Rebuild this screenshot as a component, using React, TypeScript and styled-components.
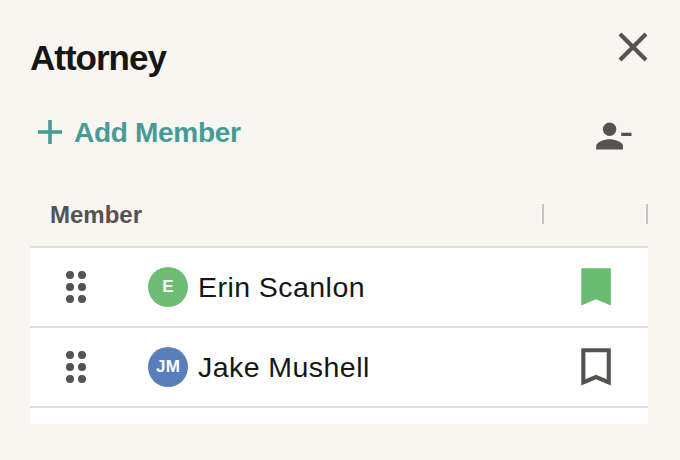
import React from 'react';
import styled, { createGlobalStyle } from 'styled-components';

const GlobalStyle = createGlobalStyle`
  * { box-sizing: border-box; }
  body {
    margin: 0;
    background: #f7f6f1;
    font-family: 'Liberation Sans', Arial, sans-serif;
    color: #161616;
  }
  svg { display: block; }
`;

const Panel = styled.main`
  width: 680px;
  height: 460px;
  padding: 31px 32px 0 30px;
  display: flex;
  flex-direction: column;
  overflow: hidden;
`;

const TitleBar = styled.header`
  display: flex;
  justify-content: space-between;
  align-items: flex-start;
  height: 79px;
`;

const Title = styled.h1`
  margin: 7px 0 0;
  font-size: 35px;
  line-height: 40px;
  font-weight: 700;
  letter-spacing: -1px;
`;

const IconButton = styled.button`
  display: block;
  padding: 0;
  border: 0;
  background: none;
  color: #555250;
`;

const Toolbar = styled.div`
  display: flex;
  justify-content: space-between;
  align-items: flex-start;
  height: 74px;
  padding: 6px 16px 0 8px;
`;

const AddButton = styled.button`
  display: flex;
  align-items: center;
  gap: 12px;
  height: 32px;
  padding: 0;
  border: 0;
  background: none;
  color: #469b97;
  font: 700 28px/32px 'Liberation Sans', Arial, sans-serif;
  letter-spacing: -0.3px;
`;

const AddLabel = styled.span`
  padding-top: 2px;
`;

const RemoveSlot = styled.div`
  padding-top: 4px;
`;

const columns = '512px 104px 2px';

const TableHead = styled.div`
  display: grid;
  grid-template-columns: ${columns};
  align-items: center;
  height: 62px;
  padding-bottom: 2px;
`;

const HeadLabel = styled.div`
  padding: 2px 0 0 20px;
  font-size: 24px;
  line-height: 28px;
  font-weight: 700;
  color: #555250;
`;

const Divider = styled.i`
  width: 2px;
  height: 20px;
  background: #c5c4c2;
`;

const TableBody = styled.div`
  height: 178px;
  background: #fff;
  border-top: 2px solid #dfdfdf;
`;

const Row = styled.div`
  display: flex;
  align-items: center;
  height: 80px;
  padding: 0 37px 0 36px;
  border-bottom: 2px solid #dfdfdf;
`;

const Avatar = styled.div<{ $color: string }>`
  display: flex;
  align-items: center;
  justify-content: center;
  width: 40px;
  height: 40px;
  margin: 0 10px 0 62px;
  border-radius: 50%;
  background: ${(p) => p.$color};
  color: #fff;
  font-size: 17px;
  line-height: 20px;
  font-weight: 700;
  letter-spacing: 0.3px;
`;

const Name = styled.div<{ $spacing: number }>`
  flex: 1;
  padding-bottom: 1px;
  font-size: 28.5px;
  line-height: 34px;
  letter-spacing: ${(p) => p.$spacing}px;
`;

const CloseIcon = () => (
  <svg width="30" height="32" viewBox="0 0 30 32" stroke="currentColor" strokeWidth="4.2">
    <path d="M2 3 28 29M28 3 2 29" />
  </svg>
);

const PlusIcon = () => (
  <svg width="24" height="24" viewBox="0 0 24 24" stroke="currentColor" strokeWidth="3.6">
    <path d="M12 0V24M0 12H24" />
  </svg>
);

const PersonRemoveIcon = () => (
  <svg width="36" height="30" viewBox="0 0 36 30" fill="currentColor">
    <circle cx="13.6" cy="9.3" r="6.7" />
    <path d="M.2 29.4V26C.2 21.7 9.1 19.2 13.6 19.2S27 21.7 27 26V29.4Z" />
    <path d="M25.2 12.7H35.5V16H25.2Z" />
  </svg>
);

const DragIcon = () => (
  <svg width="20" height="32" viewBox="0 0 20 32" fill="#555250">
    {[4, 16].map((x) => [4, 16, 28].map((y) => <circle key={`${x}-${y}`} cx={x} cy={y} r="4" />))}
  </svg>
);

const BookmarkIcon = ({ filled }: { filled: boolean }) => (
  <svg width="30" height="38" viewBox="0 0 30 38">
    {filled ? (
      <path fill="#68bb70" d="M.3 .2H29.8V37.6L15 31.2.3 37.6Z" />
    ) : (
      <path
        fill="#555250"
        fillRule="evenodd"
        d="M.3 .2H29.8V37.6L15 31.2.3 37.6ZM4.4 4.2V31.3L15 26.8 25.7 31.3V4.2Z"
      />
    )}
  </svg>
);

const members = [
  { name: 'Erin Scanlon', initials: 'E', color: '#6ebd74', saved: true, spacing: 0.45 },
  { name: 'Jake Mushell', initials: 'JM', color: '#587fbb', saved: false, spacing: 0.45 },
];

export default function App() {
  return (
    <>
      <GlobalStyle />
      <Panel>
        <TitleBar>
          <Title>Attorney</Title>
          <IconButton aria-label="Close"><CloseIcon /></IconButton>
        </TitleBar>
        <Toolbar>
          <AddButton><PlusIcon /><AddLabel>Add Member</AddLabel></AddButton>
          <RemoveSlot>
            <IconButton aria-label="Remove member"><PersonRemoveIcon /></IconButton>
          </RemoveSlot>
        </Toolbar>
        <TableHead>
          <HeadLabel>Member</HeadLabel>
          <Divider />
          <Divider />
        </TableHead>
        <TableBody>
          {members.map((m) => (
            <Row key={m.name}>
              <DragIcon />
              <Avatar $color={m.color}>{m.initials}</Avatar>
              <Name $spacing={m.spacing}>{m.name}</Name>
              <BookmarkIcon filled={m.saved} />
            </Row>
          ))}
        </TableBody>
      </Panel>
    </>
  );
}
